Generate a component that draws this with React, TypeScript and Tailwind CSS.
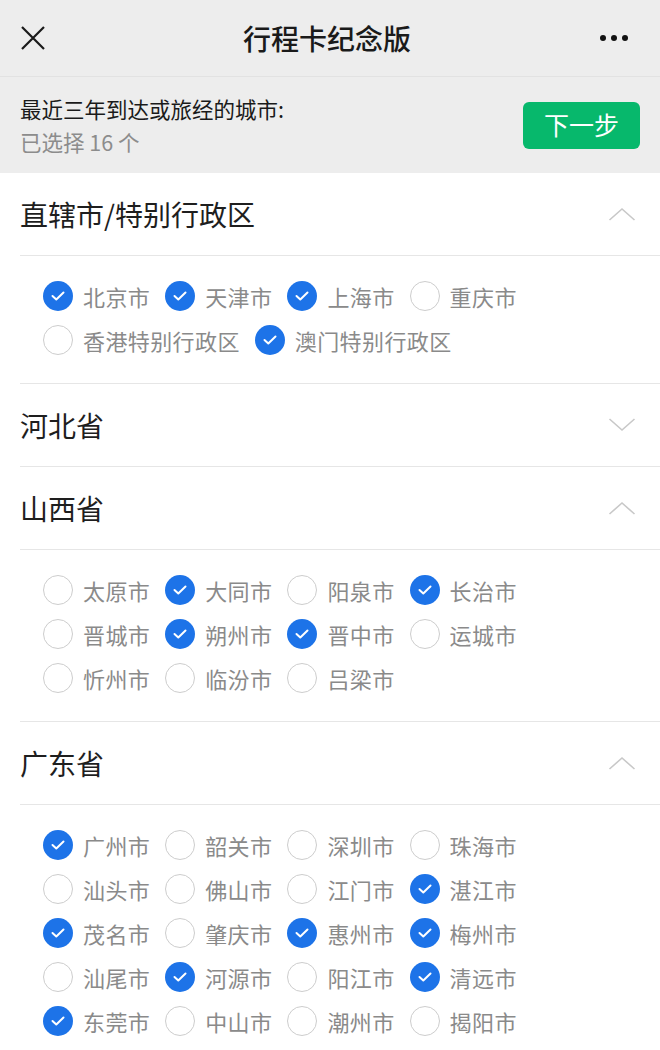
import React from "react";

interface City {
  name: string;
  checked: boolean;
}

interface Province {
  title: string;
  open: boolean;
  cities: City[];
}

const c = (name: string, checked = false): City => ({ name, checked });

const provinces: Province[] = [
  {
    title: "直辖市/特别行政区",
    open: true,
    cities: [
      c("北京市", true),
      c("天津市", true),
      c("上海市", true),
      c("重庆市"),
      c("香港特别行政区"),
      c("澳门特别行政区", true),
    ],
  },
  { title: "河北省", open: false, cities: [] },
  {
    title: "山西省",
    open: true,
    cities: [
      c("太原市"),
      c("大同市", true),
      c("阳泉市"),
      c("长治市", true),
      c("晋城市"),
      c("朔州市", true),
      c("晋中市", true),
      c("运城市"),
      c("忻州市"),
      c("临汾市"),
      c("吕梁市"),
    ],
  },
  {
    title: "广东省",
    open: true,
    cities: [
      c("广州市", true),
      c("韶关市"),
      c("深圳市"),
      c("珠海市"),
      c("汕头市"),
      c("佛山市"),
      c("江门市"),
      c("湛江市", true),
      c("茂名市", true),
      c("肇庆市"),
      c("惠州市", true),
      c("梅州市", true),
      c("汕尾市"),
      c("河源市", true),
      c("阳江市"),
      c("清远市", true),
      c("东莞市", true),
      c("中山市"),
      c("潮州市"),
      c("揭阳市"),
    ],
  },
];

const Chevron: React.FC<{ up: boolean }> = ({ up }) => (
  <svg width="28" height="16" viewBox="0 0 28 16" fill="none">
    {up ? (
      <path d="M1.5 14 L14 3 L26.5 14" stroke="#c8c8c8" strokeWidth="1.6" />
    ) : (
      <path d="M1.5 2 L14 13 L26.5 2" stroke="#c8c8c8" strokeWidth="1.6" />
    )}
  </svg>
);

const CheckCircle: React.FC<{ checked: boolean }> = ({ checked }) =>
  checked ? (
    <span className="flex h-[30px] w-[30px] shrink-0 items-center justify-center rounded-full bg-[#1d73e8]">
      <svg width="14" height="10" viewBox="0 0 14 10" fill="none">
        <path d="M1.5 5 L5.3 8.5 L12.5 1.5" stroke="white" strokeWidth="2" strokeLinecap="round" strokeLinejoin="round" />
      </svg>
    </span>
  ) : (
    <span className="h-[30px] w-[30px] shrink-0 rounded-full border border-[#cdcdcd] bg-white" />
  );

const ProvinceSection: React.FC<{ province: Province }> = ({ province }) => (
  <div className="pl-5">
    <div className="flex h-[83px] items-center justify-between border-b border-[#e6e6e6] pr-6">
      <span className="text-[28px] text-[#1e1e1e]">{province.title}</span>
      <Chevron up={province.open} />
    </div>
    {province.open && (
      <div className="flex flex-wrap gap-x-[15px] gap-y-[14px] border-b border-[#e6e6e6] pt-[25px] pb-[28px] pl-[23px] pr-[100px]">
        {province.cities.map((city) => (
          <div key={city.name} className="flex h-[30px] items-center gap-[10px]">
            <CheckCircle checked={city.checked} />
            <span className="text-[22px] leading-none tracking-[0.4px] text-[#8a8a8a]">{city.name}</span>
          </div>
        ))}
      </div>
    )}
  </div>
);

export default function App() {
  return (
    <div
      className="min-h-[1050px] w-[660px] bg-white"
      style={{ fontFamily: '"Noto Sans CJK SC", "Noto Sans", sans-serif' }}
    >
      {/* nav bar */}
      <div className="flex h-[77px] items-center justify-between border-b border-[#e2e2e2] bg-[#ededed] px-5">
        <svg width="26" height="26" viewBox="0 0 26 26" fill="none">
          <path d="M2 2 L24 24 M24 2 L2 24" stroke="#1a1a1a" strokeWidth="2.2" />
        </svg>
        <span className="pl-2 text-[28px] font-medium text-[#1a1a1a]">行程卡纪念版</span>
        <div className="flex items-center gap-[5px] pr-3">
          <span className="h-[6px] w-[6px] rounded-full bg-[#111]" />
          <span className="h-[6px] w-[6px] rounded-full bg-[#111]" />
          <span className="h-[6px] w-[6px] rounded-full bg-[#111]" />
        </div>
      </div>

      {/* selection summary */}
      <div className="flex h-[96px] items-center justify-between bg-[#ededed] pl-5 pr-5">
        <div className="flex flex-col gap-[5px]">
          <span className="text-[21.5px] leading-[28px] text-[#1a1a1a]">最近三年到达或旅经的城市:</span>
          <span className="text-[21.5px] leading-[28px] text-[#8c8c8c]">已选择 16 个</span>
        </div>
        <button className="flex h-[47px] w-[117px] items-center justify-center rounded-[6px] bg-[#07b86c] text-[25px] text-white">
          下一步
        </button>
      </div>

      {provinces.map((p) => (
        <ProvinceSection key={p.title} province={p} />
      ))}
    </div>
  );
}
